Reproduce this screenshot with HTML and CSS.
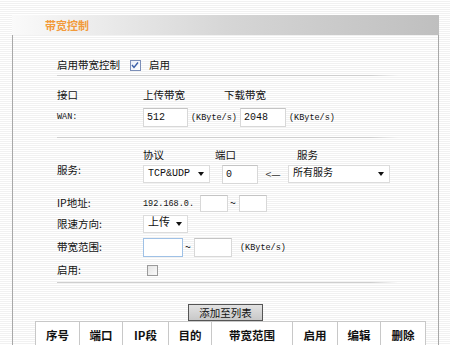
FILE: index.html
```html
<!DOCTYPE html>
<html lang="zh-CN">
<head>
	<meta charset="UTF-8">
	<title>带宽控制</title>
	<link rel="stylesheet" href="styles.css">
</head>
<body>

<div class="panel">
	<div class="panel-head">带宽控制</div>

	<div class="panel-body">

		<!-- global switch -->
		<div class="row row-enable">
			<span>启用带宽控制</span>
			<span class="check checked">
				<svg width="10" height="10" viewBox="0 0 10 10"><path d="M2 5 L4 7.5 L8 2.5" fill="none" stroke="#3a5fa8" stroke-width="1.4"/></svg>
			</span>
			<span>启用</span>
		</div>
		<div class="sep sep1"></div>

		<!-- WAN bandwidth -->
		<div class="row wan-head">
			<span class="label">接口</span>
			<span class="up-label">上传带宽</span>
			<span>下载带宽</span>
		</div>
		<div class="row wan">
			<span class="label mono">WAN:</span>
			<span class="input w45">512</span>
			<span class="mono unit">(KByte/s)</span>
			<span class="input w46">2048</span>
			<span class="mono unit">(KByte/s)</span>
		</div>
		<div class="sep sep2"></div>

		<!-- rule form -->
		<div class="service">
			<div class="label">服务:</div>
			<div class="service-grid">
				<span>协议</span>
				<span class="col-port">端口</span>
				<span class="col-svc">服务</span>
				<span class="select w67">TCP&amp;UDP<i class="arrow"></i></span>
				<span class="input w36 port">0</span>
				<span class="back">&lt;—</span>
				<span class="select w102">所有服务<i class="arrow"></i></span>
			</div>
		</div>

		<div class="row form-row ip">
			<span class="label">IP地址:</span>
			<span class="mono">192.168.0.</span>
			<span class="input w28"></span>
			<span class="tilde">~</span>
			<span class="input w28"></span>
		</div>

		<div class="row form-row dir">
			<span class="label">限速方向:</span>
			<span class="select w45 big">上传<i class="arrow"></i></span>
		</div>

		<div class="row form-row range">
			<span class="label">带宽范围:</span>
			<span class="input w40 focus"></span>
			<span class="tilde">~</span>
			<span class="input w38"></span>
			<span class="mono unit2">(KByte/s)</span>
		</div>

		<div class="row form-row on">
			<span class="label">启用:</span>
			<span class="check"></span>
		</div>
		<div class="sep sep3"></div>

		<div class="actions">
			<button class="btn">添加至列表</button>
		</div>

		<table class="rules">
			<tr>
				<th class="c1">序号</th>
				<th class="c2">端口</th>
				<th class="c3">IP段</th>
				<th class="c4">目的</th>
				<th class="c5">带宽范围</th>
				<th class="c6">启用</th>
				<th class="c7">编辑</th>
				<th class="c8">删除</th>
			</tr>
		</table>

	</div>
</div>

</body>
</html>
```

FILE: styles.css
```css
	body {
		margin: 0;
		padding: 15px 0 0 0;
		font-family: "Noto Sans CJK SC", "DejaVu Sans", sans-serif;
		font-size: 10.5px;
		line-height: 1.2;
		color: #111;
		background: repeating-linear-gradient(#ffffff 0 1px, #f1f1f1 1px 2px); /* striped page */
		height: 330px;
		overflow: hidden;
		}

	.panel {
		margin-left: 12px;
		width: 427px;
		}

	.panel-head {
		height: 20px;
		line-height: 20px;
		padding-left: 33px;
		color: #f29a3a;
		font-weight: bold;
		font-size: 11px;
		background: linear-gradient(to right, #fafafa, #d6d6d6 50%, #bfbfbf);
		}

	.panel-body {
		border-left: 1px solid #a8a8a8;
		border-right: 1px solid #a8a8a8;
		padding-left: 44px;
		height: 320px;
		}

	.row {
		display: flex;
		align-items: center;
		}

	.label {
		width: 86px;
		flex-shrink: 0;
		}

	.row-enable {
		padding-top: 24px;
		height: 12px;
		}

	.row-enable .check {
		margin: 0 8px 0 10px;
		}

	.sep {
		width: 341px;
		height: 1px;
		background: linear-gradient(to right, #cfcfcf 92%, rgba(207, 207, 207, 0));
		}

	.sep1 { margin-top: 4px; }
	.sep2 { margin-top: 8px; }
	.sep3 { margin-top: 6px; }

	.mono {
		font-family: "Liberation Mono", monospace;
		font-size: 8.5px;
		}

	/* WAN bandwidth */
	.wan-head {
		margin-top: 9px;
		height: 20px;
		}

	.up-label {
		width: 81px;
		}

	.wan {
		height: 24px;
		}

	.unit {
		width: 52px;
		padding: 3px 0 0 3px;
		box-sizing: border-box;
		}

	.input {
		box-sizing: border-box;
		display: inline-block;
		height: 19px;
		line-height: 17px;
		padding-left: 3px;
		background: #fff;
		border: 1px solid #d8d8d8;
		border-top-color: #c4c4c4;
		font-family: "Liberation Mono", monospace;
		font-size: 10px;
		}

	.w28 { width: 28px; }
	.w36 { width: 36px; }
	.w38 { width: 38px; }
	.w40 { width: 40px; }
	.w45 { width: 45px; }
	.w46 { width: 46px; }
	.w67 { width: 67px; }
	.w102 { width: 102px; }

	.input.focus {
		border-color: #9fc1e6;
		}

	/* service block */
	.service {
		display: flex;
		align-items: center;
		margin-top: 7px;
		}

	.service .label {
		padding-top: 12px;
		}

	.service-grid {
		display: grid;
		grid-template-columns: 67px 12px 36px 30px 102px;
		grid-template-rows: 20px 18px;
		align-items: center;
		}

	.service-grid .col-port {
		grid-column: 3 / 5;
		margin-left: -7px;
		}

	.service-grid .col-svc {
		grid-column: 5;
		margin-left: 9px;
		}

	.service-grid .port {
		grid-column: 3;
		}

	.back {
		text-align: center;
		color: #333;
		}

	.select {
		box-sizing: border-box;
		display: inline-flex;
		align-items: center;
		justify-content: space-between;
		height: 18px;
		padding: 0 5px 0 4px;
		background: #fff;
		border: 1px solid #dcdcdc;
		font-family: "Liberation Mono", "Noto Sans CJK SC", monospace;
		font-size: 10px;
		}

	.select.big {
		font-size: 11px;
		}

	.arrow {
		width: 0;
		height: 0;
		border-left: 3px solid transparent;
		border-right: 3px solid transparent;
		border-top: 4px solid #111;
		}

	.ip {
		margin-top: 12px;
		height: 17px;
		}

	.ip .input {
		height: 17px;
		}

	.ip .mono {
		width: 57px;
		padding-top: 2px;
		}

	.tilde {
		width: 11px;
		text-align: left;
		padding-left: 2px;
		box-sizing: border-box;
		}

	.dir {
		margin-top: 3px;
		height: 18px;
		}

	.range {
		margin-top: 5px;
		height: 18px;
		}

	.unit2 {
		margin-left: 8px;
		padding-top: 3px;
		}

	.on {
		margin-top: 8px;
		height: 12px;
		}

	.on .check {
		margin-left: 4px;
		}

	.check {
		box-sizing: border-box;
		display: inline-flex;
		width: 11px;
		height: 11px;
		background: linear-gradient(135deg, #e4e4e4, #fafafa);
		border: 1px solid #9a9a9a;
		}

	.check.checked {
		background: linear-gradient(135deg, #e8eef8, #ffffff);
		border-color: #7c8fb8;
		}

	.check svg {
		display: block;
		margin: -1px 0 0 -1px;
		}

	.actions {
		display: flex;
		margin-top: 21px;
		height: 17px;
		padding-left: 131px;
		}

	.btn {
		height: 17px;
		width: 75px;
		padding: 0;
		font-family: "Noto Sans CJK SC", sans-serif;
		font-size: 10.5px;
		line-height: 15px;
		color: #111;
		background: linear-gradient(#e2e2e2, #c8c8c8);
		border: 1px solid #555;
		cursor: pointer;
		}

	/* rule list */
	.rules {
		margin-left: -22px;
		border-collapse: collapse;
		table-layout: fixed;
		}

	.rules th {
		height: 28px;
		border: 1px solid #c8c8c8;
		font-size: 11.5px;
		font-weight: bold;
		padding: 0;
		background: #fff;
		}

	.c1 { width: 43px; }
	.c2 { width: 42px; }
	.c3 { width: 45px; }
	.c4 { width: 42px; }
	.c5 { width: 80px; }
	.c6 { width: 44px; }
	.c7 { width: 42px; }
	.c8 { width: 44px; }
```
